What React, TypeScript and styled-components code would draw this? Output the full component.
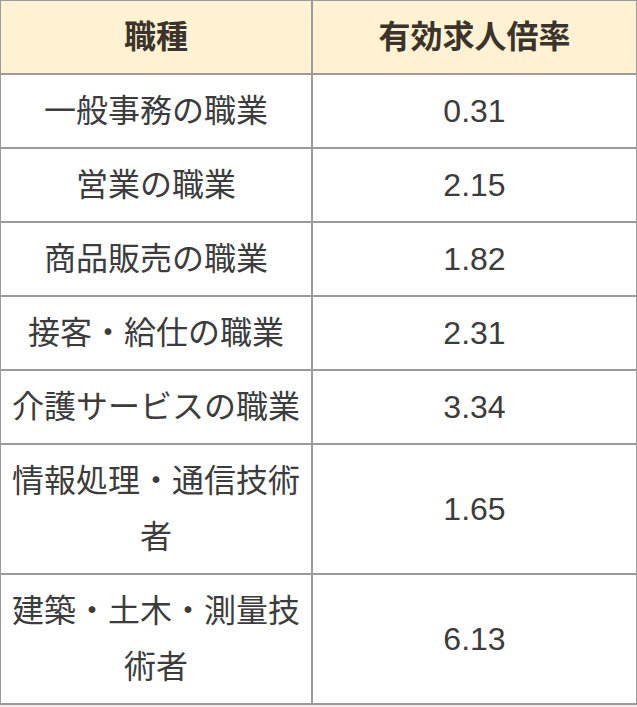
import React from 'react';
import styled, { createGlobalStyle } from 'styled-components';

interface JobRow {
  name: string;
  ratio: string;
}

const rows: JobRow[] = [
  { name: '一般事務の職業', ratio: '0.31' },
  { name: '営業の職業', ratio: '2.15' },
  { name: '商品販売の職業', ratio: '1.82' },
  { name: '接客・給仕の職業', ratio: '2.31' },
  { name: '介護サービスの職業', ratio: '3.34' },
  { name: '情報処理・通信技術者', ratio: '1.65' },
  { name: '建築・土木・測量技術者', ratio: '6.13' },
];

const GlobalStyle = createGlobalStyle`
  html, body {
    margin: 0;
    padding: 0;
    background: #f8e9ed;
  }
  body {
    font-family: "Liberation Sans", "Noto Sans CJK JP", sans-serif;
  }
`;

const Table = styled.table`
  width: 637px;
  border-collapse: collapse;
  background: #fff;
  table-layout: fixed;
  margin-left: -1px;
  margin-top: -1px;
`;

const Col = styled.col<{ $width: number }>`
  width: ${(p) => p.$width}px;
`;

const HeadCell = styled.th`
  background: #fff2d2;
  border: 2px solid #9b9b9b;
  padding: 8px 4px;
  font-size: 32px;
  line-height: 56px;
  font-weight: bold;
  color: #3a342c;
  text-align: center;
`;

const Cell = styled.td`
  border: 2px solid #9b9b9b;
  padding: 8px 4px;
  font-size: 32px;
  line-height: 56px;
  color: #3c3c3c;
  text-align: center;
  vertical-align: middle;
`;

const App: React.FC = () => {
  return (
    <>
      <GlobalStyle />
      <Table>
        <colgroup>
          <Col $width={312} />
          <Col $width={325} />
        </colgroup>
        <thead>
          <tr>
            <HeadCell>職種</HeadCell>
            <HeadCell>有効求人倍率</HeadCell>
          </tr>
        </thead>
        <tbody>
          {rows.map((row) => (
            <tr key={row.name}>
              <Cell>{row.name}</Cell>
              <Cell>{row.ratio}</Cell>
            </tr>
          ))}
        </tbody>
      </Table>
    </>
  );
};

export default App;
